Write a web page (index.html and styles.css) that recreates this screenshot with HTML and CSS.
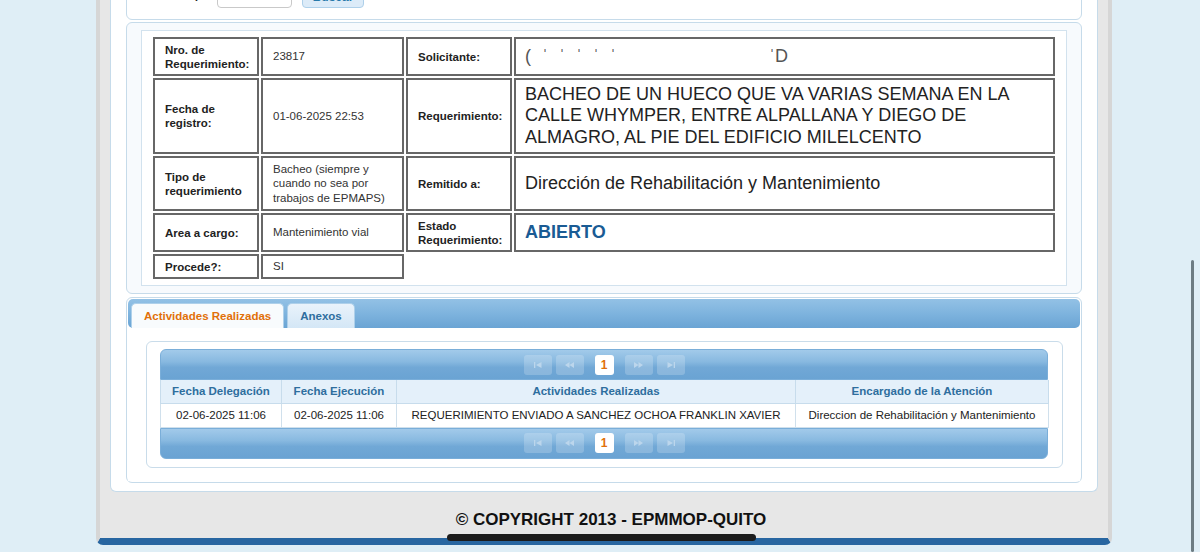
FILE: index.html
```html
<!DOCTYPE html>
<html lang="es">
<head>
<meta charset="utf-8">
<title>Detalle de Requerimiento</title>
<link rel="stylesheet" href="styles.css">
</head>
<body>
<div class="page">
  <div class="content">
    <div class="search-box">
      <span class="search-label">Nro. Req.:</span>
      <span class="search-input"></span>
      <button class="btn" type="button">Buscar</button>
    </div>

    <div class="detail-panel">
      <div class="detail-inner">
        <table class="detail">
          <tr class="r1">
            <td class="lbl c1">Nro. de Requerimiento:</td>
            <td class="val c2">23817</td>
            <td class="lbl c3">Solicitante:</td>
            <td class="big"><span class="frag">( &#712; &#712; &#712; &#712; &#712;</span><span class="frag frag-end">&#712;D</span></td>
          </tr>
          <tr class="r2">
            <td class="lbl">Fecha de registro:</td>
            <td class="val">01-06-2025 22:53</td>
            <td class="lbl">Requerimiento:</td>
            <td class="big">BACHEO DE UN HUECO QUE VA VARIAS SEMANA EN LA CALLE WHYMPER, ENTRE ALPALLANA Y DIEGO DE ALMAGRO, AL PIE DEL EDIFICIO MILELCENTO</td>
          </tr>
          <tr class="r3">
            <td class="lbl">Tipo de requerimiento</td>
            <td class="val">Bacheo (siempre y cuando no sea por trabajos de EPMAPS)</td>
            <td class="lbl">Remitido a:</td>
            <td class="big">Dirección de Rehabilitación y Mantenimiento</td>
          </tr>
          <tr class="r4">
            <td class="lbl">Area a cargo:</td>
            <td class="val">Mantenimiento vial</td>
            <td class="lbl">Estado Requerimiento:</td>
            <td class="big status">ABIERTO</td>
          </tr>
          <tr class="r5">
            <td class="lbl">Procede?:</td>
            <td class="val">SI</td>
            <td class="empty" colspan="2"></td>
          </tr>
        </table>
      </div>
    </div>

    <div class="tabview">
      <ul class="tabnav">
        <li class="tab active">Actividades Realizadas</li>
        <li class="tab">Anexos</li>
      </ul>
      <div class="tabpanel">
        <div class="grid-panel">
          <div class="pager pager-top">
            <span class="pbtn"><svg width="8" height="6" viewBox="0 0 8 6"><rect x="0" y="0" width="1.3" height="6"/><path d="M7.5 0 L2 3 L7.5 6Z"/></svg></span>
            <span class="pbtn"><svg width="9" height="6" viewBox="0 0 9 6"><path d="M4.5 0 L0 3 L4.5 6Z M9 0 L4.5 3 L9 6Z"/></svg></span>
            <span class="pnum">1</span>
            <span class="pbtn"><svg width="9" height="6" viewBox="0 0 9 6"><path d="M0 0 L4.5 3 L0 6Z M4.5 0 L9 3 L4.5 6Z"/></svg></span>
            <span class="pbtn"><svg width="8" height="6" viewBox="0 0 8 6"><path d="M0.5 0 L6 3 L0.5 6Z"/><rect x="6.7" y="0" width="1.3" height="6"/></svg></span>
          </div>
          <table class="data">
            <colgroup>
              <col class="w1"><col class="w2"><col class="w3"><col class="w4">
            </colgroup>
            <thead>
              <tr>
                <th>Fecha Delegación</th>
                <th>Fecha Ejecución</th>
                <th>Actividades Realizadas</th>
                <th>Encargado de la Atención</th>
              </tr>
            </thead>
            <tbody>
              <tr>
                <td>02-06-2025 11:06</td>
                <td>02-06-2025 11:06</td>
                <td>REQUERIMIENTO ENVIADO A SANCHEZ OCHOA FRANKLIN XAVIER</td>
                <td>Direccion de Rehabilitación y Mantenimiento</td>
              </tr>
            </tbody>
          </table>
          <div class="pager pager-bottom">
            <span class="pbtn"><svg width="8" height="6" viewBox="0 0 8 6"><rect x="0" y="0" width="1.3" height="6"/><path d="M7.5 0 L2 3 L7.5 6Z"/></svg></span>
            <span class="pbtn"><svg width="9" height="6" viewBox="0 0 9 6"><path d="M4.5 0 L0 3 L4.5 6Z M9 0 L4.5 3 L9 6Z"/></svg></span>
            <span class="pnum">1</span>
            <span class="pbtn"><svg width="9" height="6" viewBox="0 0 9 6"><path d="M0 0 L4.5 3 L0 6Z M4.5 0 L9 3 L4.5 6Z"/></svg></span>
            <span class="pbtn"><svg width="8" height="6" viewBox="0 0 8 6"><path d="M0.5 0 L6 3 L0.5 6Z"/><rect x="6.7" y="0" width="1.3" height="6"/></svg></span>
          </div>
        </div>
      </div>
    </div>
  </div>
  <div class="footer">© COPYRIGHT 2013 - EPMMOP-QUITO</div>
</div>
<div class="scroll-indicator"></div>
<div class="home-indicator"></div>
</body>
</html>
```

FILE: styles.css
```css
* { box-sizing: border-box; }
html, body { margin: 0; height: 100%; }
body {
  background: #dfeef6;
  font-family: "Liberation Sans", Arial, sans-serif;
  color: #222;
  overflow: hidden;
}

.page {
  width: 1016px;
  margin: -70px 0 0 96px;
  padding: 0 10px;
  background: #e7e7e7;
  border-left: 4px solid #d6d6d6;
  border-right: 4px solid #d6d6d6;
  border-bottom: 7px solid #2866a1;
  border-radius: 0 0 7px 7px;
}

.content {
  background: #fff;
  border: 1px solid #c6dbea;
  border-top: none;
  border-radius: 0 0 6px 6px;
  padding: 20px 15px 8px;
}

/* search box (mostly scrolled out of view) */
.search-box {
  height: 70px;
  border: 1px solid #c6dbea;
  border-radius: 6px;
  display: flex;
  align-items: flex-end;
  padding: 0 0 11px 23px;
}
.search-label {
  width: 67px;
  font-size: 11.5px;
  font-weight: bold;
  margin-bottom: 7px;
}
.search-input {
  width: 75px;
  height: 24px;
  border: 1px solid #c9c9c9;
  border-radius: 4px;
  background: #fff;
}
.btn {
  margin-left: 10px;
  width: 62px;
  height: 22px;
  border: 1px solid #aed0ea;
  border-radius: 4px;
  background: #dcebf8;
  color: #2779aa;
  font: bold 12px "Liberation Sans", Arial, sans-serif;
  padding: 0;
}

/* detail panel */
.detail-panel {
  margin-top: 2px;
  border: 1px solid #c6dbea;
  border-radius: 6px;
  padding: 7px 14px;
  background: #f7fafd;
}
.detail-inner {
  border: 1px solid #d2e2ee;
  background: #fff;
  padding: 6px 11px;
}
.detail {
  border-collapse: separate;
  border-spacing: 2px;
  margin: -2px;
  width: calc(100% + 4px);
  table-layout: fixed;
}
.detail td {
  border: 2px solid #676767;
  padding: 3px 6px 3px 10px;
  vertical-align: middle;
}
.detail .c1 { width: 106px; }
.detail .c2 { width: 143px; }
.detail .c3 { width: 106px; }
.detail td.empty { border: none; padding: 0; }
.r1 { height: 39px; }
.r2 { height: 76px; }
.r3 { height: 55px; }
.r4 { height: 39px; }
.r5 { height: 25px; }

.lbl {
  font-size: 11.5px;
  font-weight: bold;
  line-height: 14px;
  color: #222;
}
.val {
  font-size: 11.5px;
  line-height: 14.5px;
  color: #333;
}
.detail td.big {
  font-size: 18px;
  line-height: 21.5px;
  padding-left: 9px;
  padding-right: 10px;
  color: #222;
}
.detail td.status {
  color: #1a5b94;
  font-weight: bold;
}
.frag { color: #555; letter-spacing: 3px; }
.frag-end { margin-left: 150px; letter-spacing: 0; }

/* tab view */
.tabview {
  margin-top: 3px;
  border: 1px solid #c6dbea;
  border-radius: 6px;
  padding: 1px;
}
.tabnav {
  list-style: none;
  margin: 0;
  padding: 4px 3px 0;
  height: 29px;
  display: flex;
  gap: 3px;
  border-radius: 5px;
  background: linear-gradient(180deg, #93c1e5 0%, #80b5df 45%, #6aa4d4 100%);
}
.tab {
  height: 25px;
  padding: 0 12px;
  display: flex;
  align-items: center;
  border: 1px solid #aed0ea;
  border-bottom: none;
  border-radius: 5px 5px 0 0;
  font-size: 11.5px;
  font-weight: bold;
  color: #2e6e9e;
  background: linear-gradient(180deg, #e9f3fb, #d4e7f6);
}
.tab.active {
  background: #f8fbfd;
  color: #e17009;
}
.tabpanel {
  background: #fff;
  padding: 13px 17px 13px 18px;
}
.grid-panel {
  border: 1px solid #c9dcea;
  border-radius: 6px;
  padding: 7px 14px 8px 13px;
}

/* paginator */
.pager {
  height: 31px;
  display: flex;
  justify-content: center;
  align-items: center;
  gap: 4px;
  background: linear-gradient(180deg, #a2caea 0%, #88b9e0 40%, #71a8d6 60%, #6aa3d3 100%);
  border: 1px solid #7aaed9;
}
.pager-top { border-radius: 6px 6px 0 0; }
.pager-bottom { border-radius: 0 0 6px 6px; }
.pbtn {
  width: 28px;
  height: 20px;
  border-radius: 3px;
  background: rgba(255, 255, 255, 0.2);
  display: flex;
  align-items: center;
  justify-content: center;
}
.pbtn svg { fill: #bcd6ec; }
.pnum {
  width: 19px;
  height: 20px;
  margin: 0 7px;
  border-radius: 3px;
  background: #fff;
  color: #e17009;
  font-size: 12px;
  font-weight: bold;
  display: flex;
  align-items: center;
  justify-content: center;
}

/* data table */
.data {
  width: 100%;
  border-collapse: collapse;
  table-layout: fixed;
}
.data .w1 { width: 121px; }
.data .w2 { width: 115px; }
.data .w3 { width: 399px; }
.data .w4 { width: 253px; }
.data th {
  height: 23px;
  padding: 0 4px;
  background: #e4f0fa;
  color: #2e6e9e;
  font-size: 11.5px;
  font-weight: bold;
  text-align: center;
  border: 1px solid #c7dcec;
  border-top: none;
}
.data td {
  height: 24px;
  padding: 0 4px;
  font-size: 11.5px;
  color: #222;
  text-align: center;
  border: 1px solid #d0e0ec;
  white-space: nowrap;
}

/* footer */
.footer {
  padding: 18px 0 8px 14px;
  text-align: center;
  font-size: 17px;
  line-height: 20px;
  font-weight: bold;
  color: #111;
}

/* device overlays */
.scroll-indicator {
  position: fixed;
  left: 1191px;
  top: 260px;
  bottom: 0;
  width: 3px;
  border-radius: 2px;
  background: #6d7c83;
}
.home-indicator {
  position: fixed;
  left: 447px;
  top: 534px;
  width: 309px;
  height: 7px;
  border-radius: 4px;
  background: #1c1c1c;
}
```
